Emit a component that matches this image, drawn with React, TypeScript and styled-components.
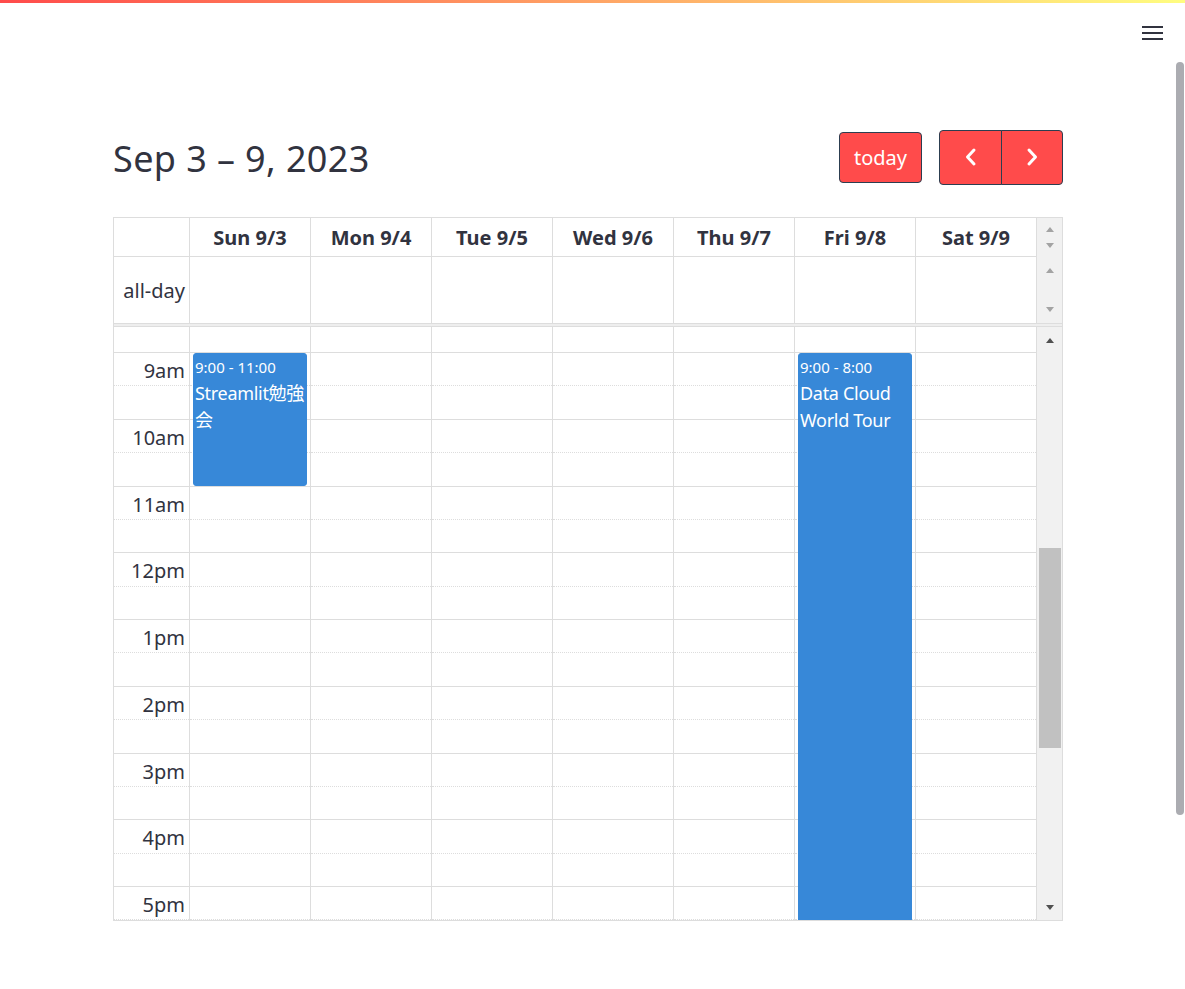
import React from "react";
import styled, { createGlobalStyle } from "styled-components";

const FONT = `"Noto Sans", "Noto Sans CJK JP", sans-serif`;
const TEXT = "#31333f";
const LINE = "#dddddd";
const SLOT_H = 33.375;
const FIRST_H = 25;
const EVENT_BLUE = "#3788d8";

const GlobalStyle = createGlobalStyle`
  html, body { margin: 0; padding: 0; background: #ffffff; overflow: hidden; }
  body { font-family: ${FONT}; color: ${TEXT}; }
  * { box-sizing: border-box; }
`;

const Page = styled.div`
  position: relative;
  width: 1185px;
  height: 989px;
  overflow: hidden;
`;

const Decoration = styled.div`
  height: 3px;
  background: linear-gradient(90deg, #ff4b4b, #fffd80);
`;

const TopHeader = styled.header`
  height: 59px;
  display: flex;
  justify-content: flex-end;
  align-items: flex-start;
  padding: 23px 22px 0 0;
`;

const MenuButton = styled.button`
  width: 21px;
  height: 14px;
  padding: 0;
  border: none;
  background: transparent;
  display: flex;
  color: ${TEXT};
`;

const PageScrollbar = styled.div`
  position: absolute;
  top: 62px;
  right: 1px;
  width: 8px;
  height: 753px;
  border-radius: 4px;
  background: #abacb1;
`;

const Main = styled.main`
  width: 950px;
  margin-left: 113px;
  padding-top: 68px;
`;

const Toolbar = styled.div`
  height: 54px;
  display: flex;
  align-items: center;
  justify-content: space-between;
  margin-bottom: 33px;
`;

const Title = styled.h2`
  margin: 0;
  font-size: 36px;
  letter-spacing: 0.4px;
  font-weight: 400;
  line-height: 1;
  color: ${TEXT};
  padding-top: 4px;
`;

const Controls = styled.div`
  display: flex;
  align-items: center;
  gap: 17px;
`;

const RedButton = styled.button<{ $w: number; $h: number; $radius: string }>`
  width: ${(p) => p.$w}px;
  height: ${(p) => p.$h}px;
  background: #ff4b4b;
  border: 1px solid #2c3e50;
  border-radius: ${(p) => p.$radius};
  color: #ffffff;
  font-family: ${FONT};
  font-size: 20px;
  padding: 0;
  display: flex;
  align-items: center;
  justify-content: center;
`;

const ButtonGroup = styled.div`
  display: flex;
  & > button + button {
    margin-left: -1px;
  }
`;

const Calendar = styled.div`
  width: 950px;
  border: 1px solid ${LINE};
`;

const HeadSection = styled.div`
  display: flex;
`;

const HeadMain = styled.div`
  width: 923px;
  display: flex;
  flex-direction: column;
`;

const HeadRow = styled.div<{ $h: number; $bottom?: boolean }>`
  display: flex;
  height: ${(p) => p.$h}px;
  border-bottom: ${(p) => (p.$bottom ? `1px solid ${LINE}` : "none")};
`;

const AxisCell = styled.div`
  width: 76px;
  flex: none;
  border-right: 1px solid ${LINE};
  display: flex;
  align-items: center;
  justify-content: flex-end;
  padding-right: 4px;
  font-size: 20px;
  color: ${TEXT};
`;

const DayHead = styled.div`
  width: 121px;
  flex: none;
  border-right: 1px solid ${LINE};
  display: flex;
  align-items: center;
  justify-content: center;
  font-size: 20px;
  font-weight: 700;
  color: ${TEXT};
  padding-top: 1px;
`;

const DayCell = styled.div`
  width: 121px;
  flex: none;
  border-right: 1px solid ${LINE};
`;

const HeadGutter = styled.div`
  width: 25px;
  background: #f1f1f1;
  display: flex;
  flex-direction: column;
`;

const MiniScroll = styled.div<{ $h: number; $pad: string }>`
  height: ${(p) => p.$h}px;
  padding: ${(p) => p.$pad};
  display: flex;
  flex-direction: column;
  justify-content: space-between;
  align-items: center;
`;

const Arrow = styled.span<{ $dir: "up" | "down"; $color: string }>`
  width: 0;
  height: 0;
  border-left: 4.5px solid transparent;
  border-right: 4.5px solid transparent;
  ${(p) =>
    p.$dir === "up"
      ? `border-bottom: 5px solid ${p.$color};`
      : `border-top: 5px solid ${p.$color};`}
`;

const Divider = styled.div`
  height: 4px;
  border-top: 1px solid ${LINE};
  border-bottom: 1px solid ${LINE};
  background: #eeeeee;
`;

const Body = styled.div`
  display: flex;
  height: 593px;
  overflow: hidden;
`;

const TimeGrid = styled.div`
  width: 923px;
  display: flex;
`;

const Column = styled.div<{ $axis?: boolean }>`
  position: relative;
  width: ${(p) => (p.$axis ? 76 : 121)}px;
  flex: none;
  border-right: 1px solid ${LINE};
  display: flex;
  flex-direction: column;
`;

const Slot = styled.div<{ $h: number; $line: "none" | "solid" | "dotted" }>`
  height: ${(p) => p.$h}px;
  flex: none;
  border-top: ${(p) => (p.$line === "none" ? "none" : `1px ${p.$line} ${LINE}`)};
`;

const SlotLabel = styled(Slot)`
  display: flex;
  justify-content: flex-end;
  align-items: center;
  padding: 3px 4px 0 0;
  font-size: 20px;
  color: ${TEXT};
`;

const EventBlock = styled.div<{ $top: number; $h: number }>`
  position: absolute;
  top: ${(p) => p.$top}px;
  left: 3px;
  right: 3px;
  height: ${(p) => p.$h}px;
  background: ${EVENT_BLUE};
  border: 1px solid ${EVENT_BLUE};
  border-radius: 3px;
  color: #ffffff;
  padding: 3px 0 0 1px;
  overflow: hidden;
`;

const EventTime = styled.div`
  font-size: 15px;
  line-height: 20px;
  white-space: nowrap;
`;

const EventTitle = styled.div`
  font-size: 18px;
  line-height: 27px;
  letter-spacing: -0.3px;
  margin-top: 3px;
`;

const BodyGutter = styled.div`
  width: 25px;
  background: #f1f1f1;
  display: flex;
  flex-direction: column;
`;

const ArrowBox = styled.div`
  height: 26px;
  flex: none;
  display: flex;
  align-items: center;
  justify-content: center;
`;

const Track = styled.div`
  flex: 1;
  padding: 195px 1px 0 2px;
`;

const Thumb = styled.div`
  height: 200px;
  background: #c1c1c1;
`;

const days = ["Sun 9/3", "Mon 9/4", "Tue 9/5", "Wed 9/6", "Thu 9/7", "Fri 9/8", "Sat 9/9"];

type Ev = { day: number; start: number; end: number; time: string; title: string };
const events: Ev[] = [
  { day: 0, start: 9, end: 11, time: "9:00 - 11:00", title: "Streamlit勉強会" },
  { day: 5, start: 9, end: 20, time: "9:00 - 8:00", title: "Data Cloud World Tour" },
];

type SlotDef = { h: number; line: "none" | "solid" | "dotted"; label?: string };
const slots: SlotDef[] = [{ h: FIRST_H, line: "none" }];
const hourLabels = ["9am", "10am", "11am", "12pm", "1pm", "2pm", "3pm", "4pm", "5pm"];
hourLabels.forEach((label) => {
  slots.push({ h: SLOT_H, line: "solid", label });
  slots.push({ h: SLOT_H, line: "dotted" });
});

const hourTop = (hour: number) => FIRST_H + (hour - 9) * 2 * SLOT_H;

const MenuIcon = () => (
  <svg width="21" height="14" viewBox="0 0 21 14">
    <rect x="0" y="0" width="21" height="2" fill="currentColor" />
    <rect x="0" y="6" width="21" height="2" fill="currentColor" />
    <rect x="0" y="12" width="21" height="2" fill="currentColor" />
  </svg>
);

const Chevron = ({ dir }: { dir: "left" | "right" }) => (
  <svg width="14" height="20" viewBox="0 0 14 20">
    <path
      d={dir === "left" ? "M10 3 L3.5 10 L10 17" : "M4 3 L10.5 10 L4 17"}
      fill="none"
      stroke="#ffffff"
      strokeWidth="3"
      strokeLinecap="round"
      strokeLinejoin="round"
    />
  </svg>
);

export default function App() {
  return (
    <Page>
      <GlobalStyle />
      <Decoration />
      <TopHeader>
        <MenuButton aria-label="menu">
          <MenuIcon />
        </MenuButton>
      </TopHeader>
      <PageScrollbar />
      <Main>
        <Toolbar>
          <Title>Sep 3 – 9, 2023</Title>
          <Controls>
            <RedButton $w={83} $h={51} $radius="4px">today</RedButton>
            <ButtonGroup>
              <RedButton $w={63} $h={55} $radius="4px 0 0 4px" aria-label="prev">
                <Chevron dir="left" />
              </RedButton>
              <RedButton $w={62} $h={55} $radius="0 4px 4px 0" aria-label="next">
                <Chevron dir="right" />
              </RedButton>
            </ButtonGroup>
          </Controls>
        </Toolbar>

        <Calendar>
          <HeadSection>
            <HeadMain>
              <HeadRow $h={39} $bottom>
                <AxisCell />
                {days.map((d) => (
                  <DayHead key={d}>{d}</DayHead>
                ))}
              </HeadRow>
              <HeadRow $h={66}>
                <AxisCell>all-day</AxisCell>
                {days.map((d) => (
                  <DayCell key={d} />
                ))}
              </HeadRow>
            </HeadMain>
            <HeadGutter>
              <MiniScroll $h={39} $pad="9px 0 9px">
                <Arrow $dir="up" $color="#a3a3a3" />
                <Arrow $dir="down" $color="#a3a3a3" />
              </MiniScroll>
              <MiniScroll $h={66} $pad="11px 0 11px">
                <Arrow $dir="up" $color="#a3a3a3" />
                <Arrow $dir="down" $color="#a3a3a3" />
              </MiniScroll>
            </HeadGutter>
          </HeadSection>
          <Divider />
          <Body>
            <TimeGrid>
              <Column $axis>
                {slots.map((s, i) => (
                  <SlotLabel key={i} $h={s.h} $line={s.line}>
                    {s.label}
                  </SlotLabel>
                ))}
              </Column>
              {days.map((d, di) => (
                <Column key={d}>
                  {slots.map((s, i) => (
                    <Slot key={i} $h={s.h} $line={s.line} />
                  ))}
                  {events
                    .filter((e) => e.day === di)
                    .map((e) => {
                      const top = hourTop(e.start) + 1;
                      const h = hourTop(e.end) - hourTop(e.start) - 1;
                      return (
                        <EventBlock key={e.title} $top={top} $h={h}>
                          <EventTime>{e.time}</EventTime>
                          <EventTitle>{e.title}</EventTitle>
                        </EventBlock>
                      );
                    })}
                </Column>
              ))}
            </TimeGrid>
            <BodyGutter>
              <ArrowBox>
                <Arrow $dir="up" $color="#505050" />
              </ArrowBox>
              <Track>
                <Thumb />
              </Track>
              <ArrowBox>
                <Arrow $dir="down" $color="#505050" />
              </ArrowBox>
            </BodyGutter>
          </Body>
        </Calendar>
      </Main>
    </Page>
  );
}
